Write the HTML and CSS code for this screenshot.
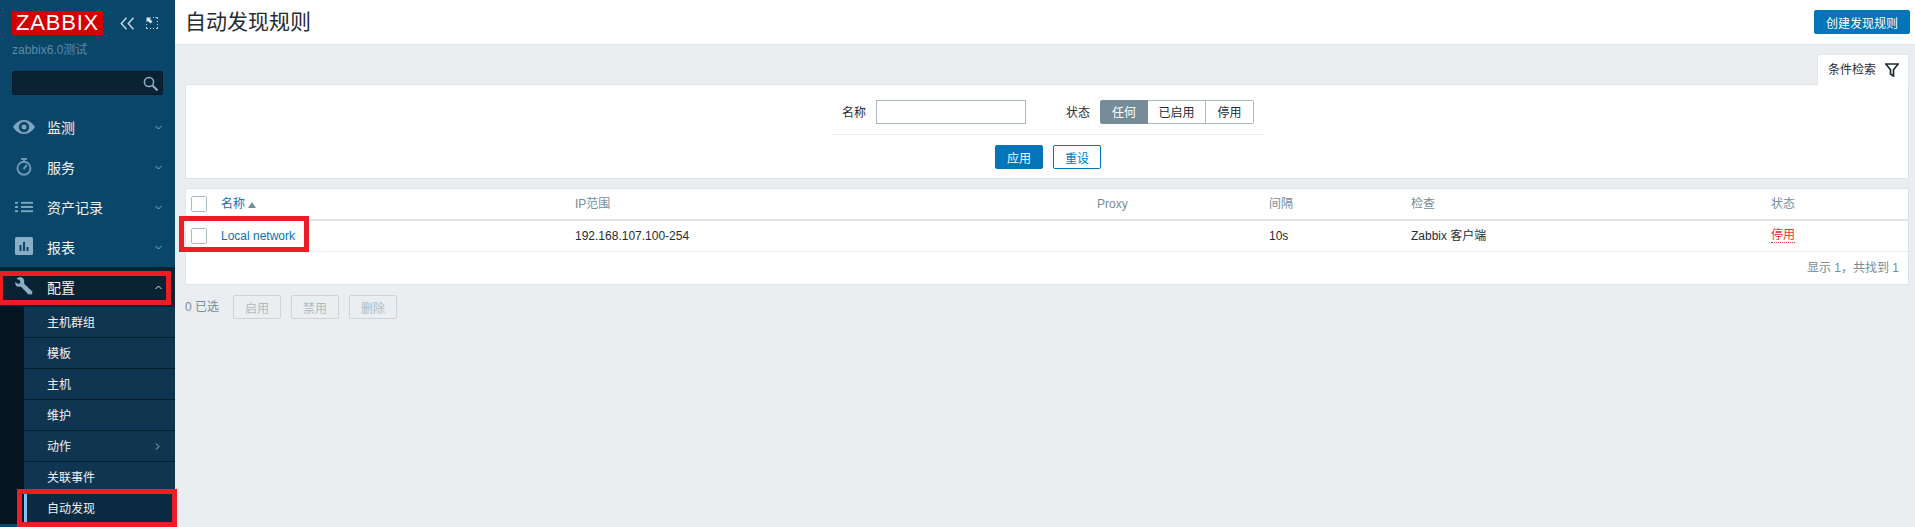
FILE: index.html
```html
<!DOCTYPE html>
<html lang="zh">
<head>
<meta charset="utf-8">
<title>自动发现规则</title>
<link rel="stylesheet" href="styles.css">
</head>
<body>
<div class="app">
  <aside class="sidebar">
    <div class="brand">
      <span class="logo">ZABBIX</span>
      <svg class="brand-icon collapse" width="15" height="13" viewBox="0 0 15 13"><path d="M6.500 .8 1.300 6.500 6.500 12.200M13.500 .8 8.300 6.500 13.500 12.200" fill="none" stroke="#c4d6e1" stroke-width="1.500"/></svg>
      <svg class="brand-icon kiosk" width="12" height="12" viewBox="0 0 12 12"><path d="M7 .5h1M9.500 .5h2V2M11.500 4v1M11.500 7v1M11.500 10v1.500H10M8 11.500H7M5 11.500H4M2 11.500H.5V10M.5 8V7" fill="none" stroke="#c4d6e1"/><path d="M.5 .5h4.800L3.900 1.900 6.500 4.500 4.500 6.500 1.900 3.900 .5 5.300z" fill="#dbe6ed"/></svg>
    </div>
    <div class="server">zabbix6.0测试</div>
    <div class="search">
      <svg width="15" height="15" viewBox="0 0 15 15"><circle cx="6" cy="6" r="4.600" fill="none" stroke="#8fb0c4" stroke-width="1.500"/><path d="M9.500 9.500l5 5" stroke="#8fb0c4" stroke-width="2"/></svg>
    </div>
    <nav class="menu">
      <div class="item">
        <svg class="ico" width="22" height="14" viewBox="0 0 22 14"><path fill-rule="evenodd" d="M11 0c5 0 9 3.500 11 7-2 3.500-6 7-11 7S2 10.500 0 7c2-3.500 6-7 11-7zm0 1.800a5.200 5.200 0 1 0 0 10.400 5.200 5.200 0 0 0 0-10.400zm0 2.700a2.500 2.500 0 1 1 0 5 2.500 2.500 0 0 1 0-5z" fill="#7ea5bf"/></svg>
        <span class="label">监测</span>
        <svg class="chev" width="7" height="5" viewBox="0 0 7 5"><path d="M.5 1 3.500 4 6.500 1" fill="none" stroke="#8fb0c4"/></svg>
      </div>
      <div class="item">
        <svg class="ico" width="16" height="18" viewBox="0 0 16 18"><circle cx="8" cy="10.200" r="6.500" fill="none" stroke="#6f98b3" stroke-width="1.900"/><path d="M5 1h6M8 1v3M7.500 11l3.500-4" stroke="#6f98b3" stroke-width="1.900" fill="none"/></svg>
        <span class="label">服务</span>
        <svg class="chev" width="7" height="5" viewBox="0 0 7 5"><path d="M.5 1 3.500 4 6.500 1" fill="none" stroke="#8fb0c4"/></svg>
      </div>
      <div class="item">
        <svg class="ico" width="18" height="11" viewBox="0 0 18 11"><path d="M0 1.200h3M0 5.500h3M0 9.800h3M6 1.200h12M6 5.500h12M6 9.800h12" stroke="#7ea5bf" stroke-width="2"/></svg>
        <span class="label">资产记录</span>
        <svg class="chev" width="7" height="5" viewBox="0 0 7 5"><path d="M.5 1 3.500 4 6.500 1" fill="none" stroke="#8fb0c4"/></svg>
      </div>
      <div class="item">
        <svg class="ico ico-up" width="18" height="18" viewBox="0 0 18 18"><rect width="18" height="18" rx="1.500" fill="#8aaec6"/><path d="M4.500 8h2v6h-2zM8 5h2v9H8zM11.500 10h2v4h-2z" fill="#0a466a"/></svg>
        <span class="label">报表</span>
        <svg class="chev" width="7" height="5" viewBox="0 0 7 5"><path d="M.5 1 3.500 4 6.500 1" fill="none" stroke="#8fb0c4"/></svg>
      </div>
      <div class="item open">
        <svg class="ico ico-up" width="18" height="18" viewBox="0 0 18 18"><path d="M7 .6c-2-.7-4.300-.2-5.400 1.200L5 3.600l.3 2.300-2 1.100L.2 5.100C0 7.300 1 9 3 9.600c1 .3 2 .2 2.800-.1l7.700 8 3.600-.2.300-2.800-8.300-7.700C9.600 4 9 1.600 7 .6z" fill="#8aaec6"/></svg>
        <span class="label">配置</span>
        <svg class="chev" width="7" height="5" viewBox="0 0 7 5"><path d="M.5 4 3.500 1 6.500 4" fill="none" stroke="#dce6ec"/></svg>
      </div>
      <div class="sub">
        <div class="sub-item">主机群组</div>
        <div class="sub-item">模板</div>
        <div class="sub-item">主机</div>
        <div class="sub-item">维护</div>
        <div class="sub-item">动作
          <svg class="chev-r" width="5" height="7" viewBox="0 0 5 7"><path d="M1 .5 4 3.500 1 6.500" fill="none" stroke="#a9c1d1"/></svg>
        </div>
        <div class="sub-item">关联事件</div>
        <div class="sub-item active">自动发现</div>
      </div>
    </nav>
  </aside>
  <main class="main">
    <header class="top">
      <h1 class="title">自动发现规则</h1>
      <button class="btn primary create">创建发现规则</button>
    </header>
    <div class="content">
      <div class="tabs">
        <div class="tab">条件检索
          <svg width="14" height="14" viewBox="0 0 14 14"><path d="M.8 1h12.400L8.500 6.800V13L5.500 11V6.800z" fill="none" stroke="#1f2c33" stroke-width="1.700"/></svg>
        </div>
      </div>
      <section class="filter">
        <div class="filter-body">
          <div class="filter-row">
            <label class="flabel">名称</label>
            <input class="finput" type="text">
            <label class="flabel status-label">状态</label>
            <div class="seg">
              <span class="seg-btn on">任何</span>
              <span class="seg-btn w2">已启用</span>
              <span class="seg-btn">停用</span>
            </div>
          </div>
          <div class="filter-actions">
            <button class="btn primary">应用</button>
            <button class="btn outline">重设</button>
          </div>
        </div>
      </section>
      <section class="panel">
        <table class="grid">
          <colgroup>
            <col class="c-check"><col class="c-name"><col class="c-ip"><col class="c-proxy"><col class="c-int"><col class="c-chk"><col>
          </colgroup>
          <thead>
            <tr>
              <th><span class="box"></span></th>
              <th class="sort">名称<span class="arrow"></span></th>
              <th>IP范围</th>
              <th>Proxy</th>
              <th>间隔</th>
              <th>检查</th>
              <th>状态</th>
            </tr>
          </thead>
          <tbody>
            <tr>
              <td><span class="box"></span></td>
              <td class="link">Local network</td>
              <td>192.168.107.100-254</td>
              <td></td>
              <td>10s</td>
              <td>Zabbix 客户端</td>
              <td><span class="off">停用</span></td>
            </tr>
          </tbody>
        </table>
        <div class="paging">显示 1，共找到 1</div>
      </section>
      <div class="actions">
        <span class="selected">0 已选</span>
        <button class="btn ghost">启用</button>
        <button class="btn ghost">禁用</button>
        <button class="btn ghost">删除</button>
      </div>
    </div>
  </main>
</div>
<div class="mark mark-config"></div>
<div class="mark mark-discovery"></div>
<div class="mark mark-row"></div>
</body>
</html>
```
FILE: styles.css
```css
* { box-sizing: border-box; }
html, body { margin: 0; height: 100%; overflow: hidden; }
body {
  font-family: "Liberation Sans", "Noto Sans CJK SC", Arial, sans-serif;
  font-size: 12px;
  line-height: 14px;
  color: #1f2c33;
  background: #ebeef0;
}
.app { display: flex; height: 527px; }

.sidebar { width: 175px; flex: none; background: #0a466a; color: #f2f2f2; display: flex; flex-direction: column; }
.brand { display: flex; align-items: center; padding: 11px 0 0 12px; height: 35px; }
.logo { width: 91px; height: 24px; background: #d40000; color: #fff; font-size: 22px; line-height: 24px; text-align: center; letter-spacing: .8px; flex: none; }
.brand-icon { flex: none; }
.collapse { margin-left: 17px; }
.kiosk { margin-left: 11px; }
.server { color: #5c8aa6; font-size: 12px; line-height: 14px; margin: 8px 0 0 12px; }
.search { margin: 14px 12px 0; height: 24px; background: #0a2334; border: 1px solid #041b29; border-radius: 2px; display: flex; align-items: center; justify-content: flex-end; padding-right: 4px; }

.menu { margin-top: 12px; }
.item { height: 40px; display: flex; align-items: center; position: relative; padding-left: 47px; font-size: 14px; color: #f2f2f2; }
.ico { position: absolute; left: 24px; top: 50%; transform: translate(-50%, -50%); }
.ico-up { margin-top: -1px; }
.label { flex: 1; padding-top: 2px; }
.chev { margin-right: 13px; }
.item.open { background: #0a2334; }
.sub { margin-left: 24px; background: #103550; box-shadow: -24px 0 0 #05141f; }
.sub-item { height: 31px; display: flex; align-items: center; justify-content: space-between; padding: 1px 14px 0 23px; border-bottom: 1px solid #05202f; font-size: 12px; color: #f2f2f2; }
.sub-item.active { background: #0a2b42; border-left: 3px solid #7fc4f0; padding-left: 20px; border-bottom: 0; }
.chev-r { margin-right: 1px; }

.main { flex: 1; min-width: 0; display: flex; flex-direction: column; }
.top { height: 45px; background: #fff; border-bottom: 1px solid #dfe4e7; display: flex; align-items: center; justify-content: space-between; padding: 0 5px 0 10px; }
.title { margin: 0; font-size: 21px; line-height: 28px; font-weight: 400; color: #1f2c33; }
.btn { font-family: inherit; font-size: 12px; height: 24px; padding: 0; border-radius: 2px; border: 1px solid transparent; background: #fff; }
.primary { background: #0275b8; color: #fff; border-color: #0275b8; width: 48px; }
.primary.create { width: 96px; }
.outline { color: #0275b8; border-color: #0275b8; width: 48px; }
.ghost { width: 48px; color: #acbbc2; border: 1px solid #cdd4d9; background: #ebeef0; }

.content { flex: 1; padding: 9px 6px 0 10px; }
.tabs { display: flex; justify-content: flex-end; height: 30px; }
.tab { width: 92px; height: 31px; position: relative; z-index: 1; background: #fff; border: 1px solid #e4e8ea; border-bottom: 0; display: flex; align-items: center; justify-content: space-between; padding: 0 9px 1px 10px; }
.filter { background: #fff; border: 1px solid #dfe4e7; height: 95px; display: flex; justify-content: center; }
.filter-body { width: 431px; margin-left: 1px; }
.filter-row { height: 50px; padding-top: 15px; border-bottom: 1px solid #ebeef0; display: flex; align-items: flex-start; }
.flabel { line-height: 26px; margin-left: 10px; color: #1f2c33; }
.finput { width: 150px; height: 24px; margin-left: 10px; border: 1px solid #acbbc2; background: #fff; padding: 0; border-radius: 0; }
.status-label { margin-left: 40px; }
.seg { display: flex; margin-left: 10px; }
.seg-btn { width: 48px; height: 24px; line-height: 24px; text-align: center; border: 1px solid #acbbc2; border-left-width: 0; background: #fff; }
.seg-btn:first-child { border-left-width: 1px; border-radius: 2px 0 0 2px; }
.seg-btn:last-child { border-radius: 0 2px 2px 0; }
.seg-btn.w2 { width: 58px; }
.seg-btn.on { background: #768d99; border-color: #768d99; color: #fff; }
.filter-actions { display: flex; justify-content: center; gap: 10px; padding: 10px 0 0 1px; }

.panel { margin-top: 9px; background: #fff; border: 1px solid #dfe4e7; height: 97px; }
.grid { width: 100%; border-collapse: collapse; table-layout: fixed; }
.c-check { width: 35px; }
.c-name { width: 354px; }
.c-ip { width: 522px; }
.c-proxy { width: 172px; }
.c-int { width: 142px; }
.c-chk { width: 360px; }
th { height: 31px; text-align: left; font-weight: 400; color: #768d99; padding: 0; border-bottom: 2px solid #dfe4e7; }
td { height: 31px; padding: 0; border-bottom: 1px solid #ebeef0; color: #1f2c33; }
th:first-child, td:first-child { padding-left: 5px; }
.box { display: block; width: 16px; height: 16px; border: 1px solid #acbbc2; border-radius: 2px; background: #fff; }
.sort { color: #0275b8; }
.arrow { display: inline-block; margin-left: 3px; border: 4px solid transparent; border-top: 0; border-bottom: 6px solid #768d99; vertical-align: 0; }
.link { color: #0275b8; }
.off { display: inline-block; color: #e33734; border-bottom: 1px dotted #e33734; }
.paging { text-align: right; color: #768d99; padding: 9px 9px 0 0; line-height: 14px; }

.actions { display: flex; align-items: center; gap: 10px; margin-top: 10px; }
.selected { color: #768d99; width: 38px; }

.mark { position: absolute; border: 5px solid #ee1c25; pointer-events: none; }
.mark-config { left: 0; top: 271px; width: 171px; height: 34px; border-left-width: 3px; }
.mark-discovery { left: 17px; top: 489px; width: 160px; height: 38px; }
.mark-row { left: 179px; top: 216px; width: 130px; height: 36px; }
```
